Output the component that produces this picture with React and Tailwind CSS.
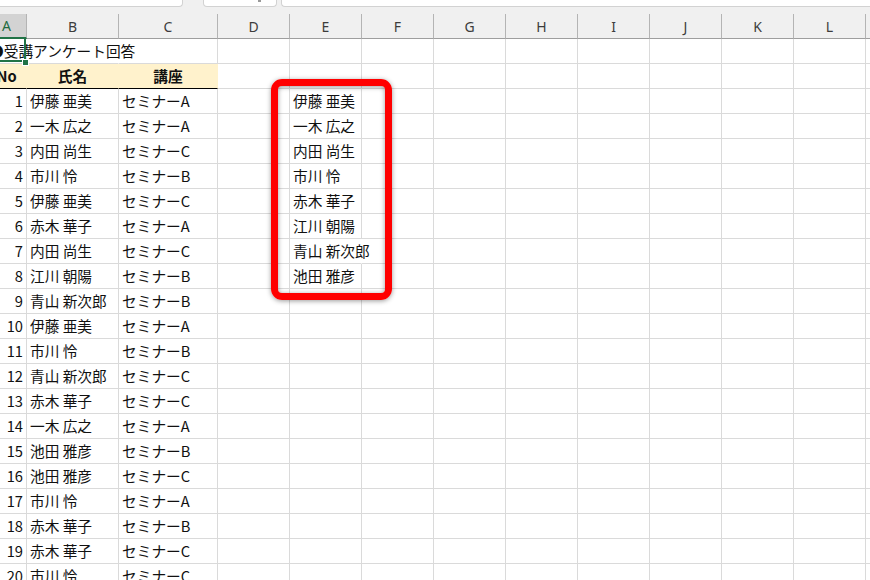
import React from 'react';
import clsx from 'clsx';

const COLS =
  'grid grid-cols-[40px_92px_99px_72px_72px_72px_72px_72px_72px_72px_72px_72px_72px]';
const LETTERS = ['A', 'B', 'C', 'D', 'E', 'F', 'G', 'H', 'I', 'J', 'K', 'L', 'M'];

const rows = [
  ['伊藤 亜美', 'セミナーA'],
  ['一木 広之', 'セミナーA'],
  ['内田 尚生', 'セミナーC'],
  ['市川 怜', 'セミナーB'],
  ['伊藤 亜美', 'セミナーC'],
  ['赤木 華子', 'セミナーA'],
  ['内田 尚生', 'セミナーC'],
  ['江川 朝陽', 'セミナーB'],
  ['青山 新次郎', 'セミナーB'],
  ['伊藤 亜美', 'セミナーA'],
  ['市川 怜', 'セミナーB'],
  ['青山 新次郎', 'セミナーC'],
  ['赤木 華子', 'セミナーC'],
  ['一木 広之', 'セミナーA'],
  ['池田 雅彦', 'セミナーB'],
  ['池田 雅彦', 'セミナーC'],
  ['市川 怜', 'セミナーA'],
  ['赤木 華子', 'セミナーB'],
  ['赤木 華子', 'セミナーC'],
  ['市川 怜', 'セミナーC'],
];

// unique names pulled out into column E
const uniqueNames = [
  '伊藤 亜美',
  '一木 広之',
  '内田 尚生',
  '市川 怜',
  '赤木 華子',
  '江川 朝陽',
  '青山 新次郎',
  '池田 雅彦',
];

function Cell({ children, className, edge = 'border-r-[#dadada]' }) {
  return (
    <div
      className={clsx(
        'relative h-[25px] border-b border-r border-b-[#dadada] flex items-center px-[3px] pb-[1px] whitespace-nowrap text-[14.7px] leading-[24px] text-[#111]',
        edge,
        className
      )}
    >
      {children}
    </div>
  );
}

function FormulaStrip() {
  return (
    <div className="flex h-[14px] bg-[#f0f0f0]">
      <div className="w-[183px] h-[7px] bg-white border-b border-r border-[#d2d2d2] rounded-br-[4px]" />
      <div className="relative ml-[20px] w-[74px] h-[7px] bg-white border border-t-0 border-[#d2d2d2] rounded-b-[4px]">
        <span className="absolute left-[54px] top-0 w-[3px] h-[2px] bg-[#9a9a9a]" />
      </div>
      <div className="ml-[4px] flex-1 h-[7px] bg-white border-b border-l border-[#d2d2d2] rounded-bl-[4px]" />
    </div>
  );
}

function ColumnHeader() {
  return (
    <div className={clsx(COLS, "font-['Noto_Sans',sans-serif] text-[14px]")}>
      {LETTERS.map((l, i) => (
        <div
          key={l}
          className={clsx(
            'h-[25px] flex items-center justify-center border-r border-r-[#b4b4b4]',
            i === 0
              ? 'bg-[#d3d3d3] text-[#1e6b41] border-b-2 border-b-[#217346]'
              : 'bg-[#f0f0f0] text-[#3c3c3c] border-b border-b-[#9e9e9e]'
          )}
        >
          {l}
        </div>
      ))}
    </div>
  );
}

function BlankCells({ from = 3, spillE = false, children }) {
  return LETTERS.slice(from).map((l) => (
    <Cell key={l} edge={l === 'E' && spillE ? 'border-r-transparent' : 'border-r-[#dadada]'}>
      {l === 'E' ? children : null}
    </Cell>
  ));
}

export default function App() {
  return (
    <div className="relative w-[870px] h-[580px] overflow-hidden bg-white font-['Noto_Sans_CJK_JP',sans-serif]">
      <FormulaStrip />

      <div className="-ml-[13px]">
        <ColumnHeader />

        {/* title row, A1 selected */}
        <div className={COLS}>
          <Cell edge="border-r-transparent" className="z-10 overflow-visible">
            <span className="-ml-[1px]">●受講アンケート回答</span>
            <div className="absolute left-0 right-0 top-[-2px] bottom-[1px] border-2 border-[#217346]" />
            <div className="absolute right-[-2px] bottom-[-2px] w-[5px] h-[5px] bg-[#217346] outline outline-1 outline-white" />
          </Cell>
          <Cell edge="border-r-transparent" />
          <Cell />
          <BlankCells />
        </div>

        {/* table header */}
        <div className={COLS}>
          {['No', '氏名', '講座'].map((t) => (
            <Cell
              key={t}
              edge="border-r-[#fff2cc]"
              className="bg-[#fff2cc] border-b-black justify-center font-bold"
            >
              {t}
            </Cell>
          ))}
          <BlankCells />
        </div>

        {rows.map(([name, course], i) => (
          <div key={i} className={COLS}>
            <Cell className="justify-end">{i + 1}</Cell>
            <Cell>{name}</Cell>
            <Cell>{course}</Cell>
            <BlankCells spillE={uniqueNames[i] === '青山 新次郎'}>
              {uniqueNames[i] && <span className="relative z-10">{uniqueNames[i]}</span>}
            </BlankCells>
          </div>
        ))}
      </div>

      {/* highlight frame over the extracted names */}
      <div className="absolute left-[271px] top-[79px] w-[121px] h-[221px] rounded-[11px] border-[7px] border-[#ff0000] shadow-[0_1px_5px_rgba(0,0,0,0.4),inset_0_1px_5px_rgba(0,0,0,0.4)]" />
    </div>
  );
}
